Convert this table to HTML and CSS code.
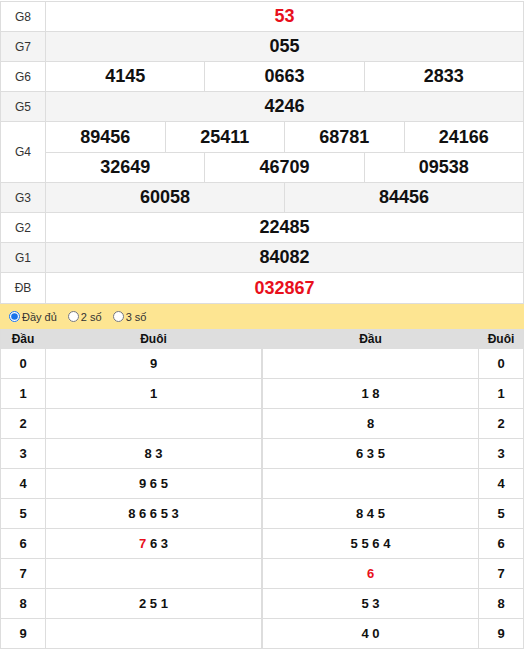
FILE: index.html
```html
<!DOCTYPE html>
<html lang="vi">
<head>
<meta charset="utf-8">
<link rel="stylesheet" href="styles.css">
</head>
<body>
<div class="wrap">
  <div class="kq">
    <div class="row"><div class="lbl">G8</div><div class="vals"><div class="line"><span class="c red">53</span></div></div></div>
    <div class="row alt"><div class="lbl">G7</div><div class="vals"><div class="line"><span class="c">055</span></div></div></div>
    <div class="row"><div class="lbl">G6</div><div class="vals"><div class="line"><span class="c">4145</span><span class="c">0663</span><span class="c">2833</span></div></div></div>
    <div class="row alt"><div class="lbl">G5</div><div class="vals"><div class="line"><span class="c">4246</span></div></div></div>
    <div class="row"><div class="lbl">G4</div><div class="vals">
      <div class="line tall"><span class="c">89456</span><span class="c">25411</span><span class="c">68781</span><span class="c">24166</span></div>
      <div class="line tall"><span class="c">32649</span><span class="c">46709</span><span class="c">09538</span></div>
    </div></div>
    <div class="row alt"><div class="lbl">G3</div><div class="vals"><div class="line"><span class="c">60058</span><span class="c">84456</span></div></div></div>
    <div class="row"><div class="lbl">G2</div><div class="vals"><div class="line"><span class="c">22485</span></div></div></div>
    <div class="row alt"><div class="lbl">G1</div><div class="vals"><div class="line"><span class="c">84082</span></div></div></div>
    <div class="row"><div class="lbl">ĐB</div><div class="vals"><div class="line tall"><span class="c red">032867</span></div></div></div>
  </div>

  <div class="opts">
    <label class="opt"><input type="radio" name="m" checked> Đầy đủ</label>
    <label class="opt"><input type="radio" name="m"> 2 số</label>
    <label class="opt"><input type="radio" name="m"> 3 số</label>
  </div>

  <div class="lt">
    <div class="lrow head"><span class="d">Đầu</span><span class="t">Đuôi</span><span class="t2">Đầu</span><span class="d2">Đuôi</span></div>
    <div class="lrow"><span class="d">0</span><span class="t">9</span><span class="t2"></span><span class="d2">0</span></div>
    <div class="lrow"><span class="d">1</span><span class="t">1</span><span class="t2">1 8</span><span class="d2">1</span></div>
    <div class="lrow"><span class="d">2</span><span class="t"></span><span class="t2">8</span><span class="d2">2</span></div>
    <div class="lrow"><span class="d">3</span><span class="t">8 3</span><span class="t2">6 3 5</span><span class="d2">3</span></div>
    <div class="lrow"><span class="d">4</span><span class="t">9 6 5</span><span class="t2"></span><span class="d2">4</span></div>
    <div class="lrow"><span class="d">5</span><span class="t">8 6 6 5 3</span><span class="t2">8 4 5</span><span class="d2">5</span></div>
    <div class="lrow"><span class="d">6</span><span class="t"><span class="red">7</span> 6 3</span><span class="t2">5 5 6 4</span><span class="d2">6</span></div>
    <div class="lrow"><span class="d">7</span><span class="t"></span><span class="t2"><span class="red">6</span></span><span class="d2">7</span></div>
    <div class="lrow"><span class="d">8</span><span class="t">2 5 1</span><span class="t2">5 3</span><span class="d2">8</span></div>
    <div class="lrow"><span class="d">9</span><span class="t"></span><span class="t2">4 0</span><span class="d2">9</span></div>
  </div>
</div>
</body>
</html>
```

FILE: styles.css
```css
* { box-sizing: border-box; }
html, body { margin: 0; padding: 0; background: #fff; }
body { font-family: "Liberation Sans", Arial, sans-serif; color: #111; }
.wrap { width: 524px; padding-top: 1px; }

.kq { border: 1px solid #ddd; border-bottom: none; }
.row { display: flex; border-bottom: 1px solid #ddd; background: #fff; }
.row.alt { background: #f4f4f4; }
.lbl {
  width: 45px; flex: none; border-right: 1px solid #ddd;
  display: flex; align-items: center; justify-content: center;
  font-size: 12px; color: #333;
}
.vals { flex: 1; display: flex; flex-direction: column; }
.line { display: flex; height: 29px; }
.line.tall { height: 30px; }
.line + .line { border-top: 1px solid #ddd; }
.c {
  flex: 1 1 0; display: flex; align-items: center; justify-content: center;
  font-size: 18px; font-weight: bold; color: #111;
}
.c + .c { border-left: 1px solid #ddd; }
.red { color: #e8101c; }
.c.red { color: #e8101c; }

.opts {
  height: 25px; background: #fde592; display: flex; align-items: center;
  padding-left: 9px; gap: 11px; font-size: 11px; color: #333;
}
.opt { display: flex; align-items: center; gap: 2px; }
.opt input { width: 11px; height: 11px; margin: 0; accent-color: #1a73e8; }

.lt { border-left: 1px solid #ddd; border-right: 1px solid #ddd; }
.lrow { display: flex; height: 30px; border-bottom: 1px solid #ddd; font-size: 13px; font-weight: bold; color: #111; }
.lrow > span { display: block; text-align: center; line-height: 29px; white-space: pre; }
.lrow .d { width: 45px; border-right: 1px solid #ddd; }
.lrow .t { width: 217px; border-right: 2px solid #ddd; }
.lrow .t2 { width: 216px; border-right: 1px solid #ddd; }
.lrow .d2 { flex: 1; }
.lrow.head { height: 20px; background: #dedede; border-bottom: none; font-size: 12px; }
.lrow.head > span { border-right-color: transparent; line-height: 20px; }
```
